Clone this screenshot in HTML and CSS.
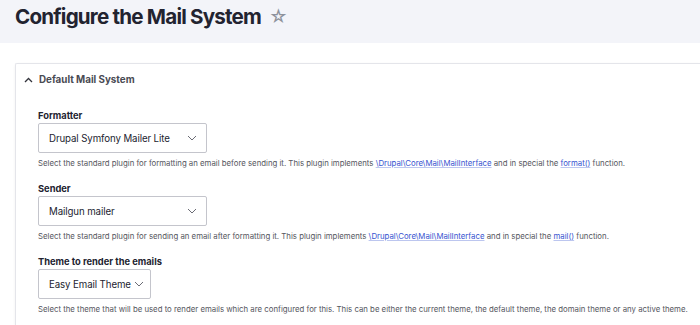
FILE: index.html
```html
<!DOCTYPE html>
<html>
<head>
<meta charset="utf-8">
<link rel="stylesheet" href="styles.css">
</head>
<body>
<header class="page-header">
  <h1 class="page-title">Configure the Mail System<span class="star">☆</span></h1>
</header>
<main class="content">
  <section class="card">
    <div class="card-summary">
      <svg class="chev-up" width="9" height="6" viewBox="0 0 9 6"><path d="M1 5 L4.5 1.5 L8 5" fill="none" stroke="#33343c" stroke-width="1.3"/></svg>
      <span>Default Mail System</span>
    </div>
    <div class="card-body">
      <div class="field">
        <label class="field-label">Formatter</label>
        <div class="select select-wide"><span>Drupal Symfony Mailer Lite</span><svg class="chev" width="10" height="6" viewBox="0 0 10 6"><path d="M1 1 L5 5 L9 1" fill="none" stroke="#6b6c75" stroke-width="1"/></svg></div>
        <p class="desc">Select the standard plugin for formatting an email before sending it. This plugin implements <a href="#">\Drupal\Core\Mail\MailInterface</a> and in special the <a href="#">format()</a> function.</p>
      </div>
      <div class="field">
        <label class="field-label">Sender</label>
        <div class="select select-wide"><span>Mailgun mailer</span><svg class="chev" width="10" height="6" viewBox="0 0 10 6"><path d="M1 1 L5 5 L9 1" fill="none" stroke="#6b6c75" stroke-width="1"/></svg></div>
        <p class="desc">Select the standard plugin for sending an email after formatting it. This plugin implements <a href="#">\Drupal\Core\Mail\MailInterface</a> and in special the <a href="#">mail()</a> function.</p>
      </div>
      <div class="field">
        <label class="field-label">Theme to render the emails</label>
        <div class="select select-narrow"><span>Easy Email Theme</span><svg class="chev" width="10" height="6" viewBox="0 0 10 6"><path d="M1 1 L5 5 L9 1" fill="none" stroke="#6b6c75" stroke-width="1"/></svg></div>
        <p class="desc">Select the theme that will be used to render emails which are configured for this. This can be either the current theme, the default theme, the domain theme or any active theme.</p>
      </div>
    </div>
  </section>
</main>
</body>
</html>
```
FILE: styles.css
```css
* { box-sizing: border-box; }
html, body { margin: 0; padding: 0; background: #fff; }
body {
  font-family: Inter, "Liberation Sans", sans-serif;
  color: #222330;
  overflow: hidden;
  width: 700px;
  height: 325px;
}
.page-header {
  background: #f3f4f9;
  height: 43px;
  padding: 0 15px;
}
.page-title {
  margin: 0;
  font-size: 20.6px;
  font-weight: 700;
  line-height: 34px;
  letter-spacing: -0.8px;
  white-space: nowrap;
  display: flex;
  align-items: center;
}
.star {
  font-weight: 400;
  color: #8e929c;
  font-size: 18px;
  letter-spacing: 0;
  margin-left: 8px;
}
.content {
  padding: 20px 0 0 15px;
}
.card {
  width: 685px;
  height: 262px;
  border: 1px solid #e4e5ea;
  border-right: none;
  border-bottom: none;
  border-radius: 2px 0 0 0;
  box-shadow: 0 1px 3px rgba(0,0,0,0.06);
  background: #fff;
  overflow: hidden;
}
.card-summary {
  display: flex;
  align-items: center;
  gap: 6px;
  height: 31px;
  padding-left: 8px;
  font-size: 9.8px;
  font-weight: 700;
  color: #4a4b53;
}
.card-body {
  padding: 15px 0 0 22px;
}
.field { margin-bottom: 14px; }
.field:last-child { margin-bottom: 0; }
.field-label {
  display: block;
  font-size: 9.3px;
  font-weight: 700;
  line-height: 12px;
  margin-bottom: 1px;
  color: #222330;
}
.select {
  display: flex;
  align-items: center;
  justify-content: space-between;
  height: 30px;
  border: 1px solid #c4c5cc;
  border-radius: 2px;
  padding: 0 9px 0 10px;
  font-size: 9.7px;
  letter-spacing: -0.1px;
  color: #222330;
  white-space: nowrap;
}
.select-wide { width: 169px; }
.select-narrow { width: 113px; padding-right: 9px; }
.select-narrow .chev { margin-left: 3px; }
.select-narrow span { flex: 1; }
.chev { flex: none; }
.desc {
  margin: 4px 0 0;
  font-size: 7.8px;
  line-height: 12px;
  color: #55565e;
  white-space: nowrap;
}
.desc a {
  color: #3653d0;
  text-decoration: underline;
  text-decoration-color: #bcc6ef;
}
```
